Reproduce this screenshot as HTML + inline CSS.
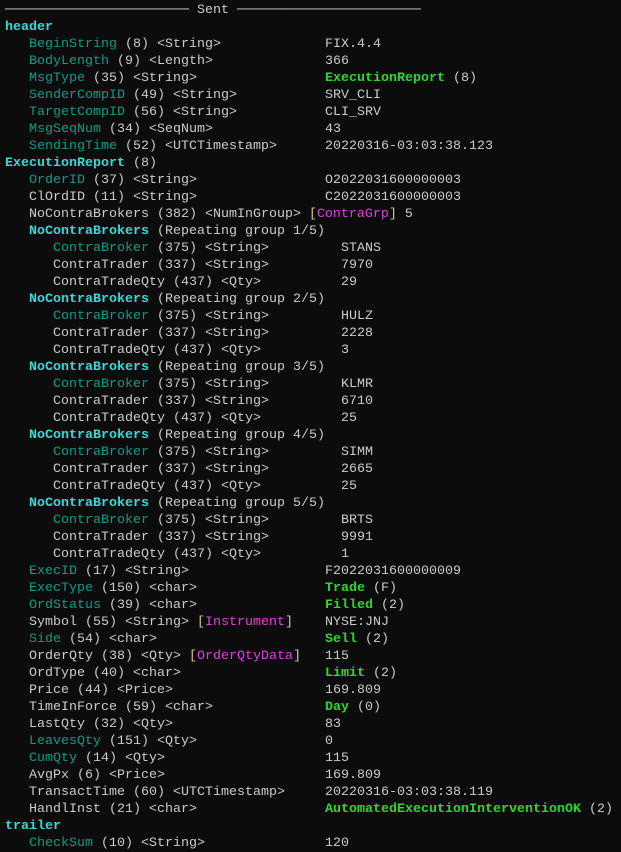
<!DOCTYPE html>
<html><head><meta charset="utf-8"><style>
html,body{margin:0;background:#0c0c0c;}
body{width:621px;height:852px;overflow:hidden;font-family:"Liberation Mono","DejaVu Sans Mono",monospace;font-size:13.33px;color:#cccccc;}
.w{padding-left:5px;padding-top:2px;}
.l{height:17px;line-height:17px;white-space:pre;}
.i1{padding-left:24px}.i2{padding-left:48px}
.k1{display:inline-block;width:296px}
.k2{display:inline-block;width:288px}
.t{color:#139a86}.c{color:#3ad8d8;font-weight:bold}.g{color:#2ed82e;font-weight:bold}.m{color:#e040e0}.y{color:#d8c89a}
</style></head><body><div class="w">
<div class="l">─────────────────────── Sent ───────────────────────</div>
<div class="l c">header</div>
<div class="l i1"><span class="k1"><span class="t">BeginString</span> (8) &lt;String&gt;</span>FIX.4.4</div>
<div class="l i1"><span class="k1"><span class="t">BodyLength</span> (9) &lt;Length&gt;</span>366</div>
<div class="l i1"><span class="k1"><span class="t">MsgType</span> (35) &lt;String&gt;</span><span class="g">ExecutionReport</span> (8)</div>
<div class="l i1"><span class="k1"><span class="t">SenderCompID</span> (49) &lt;String&gt;</span>SRV_CLI</div>
<div class="l i1"><span class="k1"><span class="t">TargetCompID</span> (56) &lt;String&gt;</span>CLI_SRV</div>
<div class="l i1"><span class="k1"><span class="t">MsgSeqNum</span> (34) &lt;SeqNum&gt;</span>43</div>
<div class="l i1"><span class="k1"><span class="t">SendingTime</span> (52) &lt;UTCTimestamp&gt;</span>20220316-03:03:38.123</div>
<div class="l"><span class="c">ExecutionReport</span> (8)</div>
<div class="l i1"><span class="k1"><span class="t">OrderID</span> (37) &lt;String&gt;</span>O2022031600000003</div>
<div class="l i1"><span class="k1">ClOrdID (11) &lt;String&gt;</span>C2022031600000003</div>
<div class="l i1">NoContraBrokers (382) &lt;NumInGroup&gt; <span class="y">[</span><span class="m">ContraGrp</span><span class="y">]</span> 5</div>
<div class="l i1"><span class="c">NoContraBrokers</span> (Repeating group 1/5)</div>
<div class="l i2"><span class="k2"><span class="t">ContraBroker</span> (375) &lt;String&gt;</span>STANS</div>
<div class="l i2"><span class="k2">ContraTrader (337) &lt;String&gt;</span>7970</div>
<div class="l i2"><span class="k2">ContraTradeQty (437) &lt;Qty&gt;</span>29</div>
<div class="l i1"><span class="c">NoContraBrokers</span> (Repeating group 2/5)</div>
<div class="l i2"><span class="k2"><span class="t">ContraBroker</span> (375) &lt;String&gt;</span>HULZ</div>
<div class="l i2"><span class="k2">ContraTrader (337) &lt;String&gt;</span>2228</div>
<div class="l i2"><span class="k2">ContraTradeQty (437) &lt;Qty&gt;</span>3</div>
<div class="l i1"><span class="c">NoContraBrokers</span> (Repeating group 3/5)</div>
<div class="l i2"><span class="k2"><span class="t">ContraBroker</span> (375) &lt;String&gt;</span>KLMR</div>
<div class="l i2"><span class="k2">ContraTrader (337) &lt;String&gt;</span>6710</div>
<div class="l i2"><span class="k2">ContraTradeQty (437) &lt;Qty&gt;</span>25</div>
<div class="l i1"><span class="c">NoContraBrokers</span> (Repeating group 4/5)</div>
<div class="l i2"><span class="k2"><span class="t">ContraBroker</span> (375) &lt;String&gt;</span>SIMM</div>
<div class="l i2"><span class="k2">ContraTrader (337) &lt;String&gt;</span>2665</div>
<div class="l i2"><span class="k2">ContraTradeQty (437) &lt;Qty&gt;</span>25</div>
<div class="l i1"><span class="c">NoContraBrokers</span> (Repeating group 5/5)</div>
<div class="l i2"><span class="k2"><span class="t">ContraBroker</span> (375) &lt;String&gt;</span>BRTS</div>
<div class="l i2"><span class="k2">ContraTrader (337) &lt;String&gt;</span>9991</div>
<div class="l i2"><span class="k2">ContraTradeQty (437) &lt;Qty&gt;</span>1</div>
<div class="l i1"><span class="k1"><span class="t">ExecID</span> (17) &lt;String&gt;</span>F2022031600000009</div>
<div class="l i1"><span class="k1"><span class="t">ExecType</span> (150) &lt;char&gt;</span><span class="g">Trade</span> (F)</div>
<div class="l i1"><span class="k1"><span class="t">OrdStatus</span> (39) &lt;char&gt;</span><span class="g">Filled</span> (2)</div>
<div class="l i1"><span class="k1">Symbol (55) &lt;String&gt; <span class="y">[</span><span class="m">Instrument</span><span class="y">]</span></span>NYSE:JNJ</div>
<div class="l i1"><span class="k1"><span class="t">Side</span> (54) &lt;char&gt;</span><span class="g">Sell</span> (2)</div>
<div class="l i1"><span class="k1">OrderQty (38) &lt;Qty&gt; <span class="y">[</span><span class="m">OrderQtyData</span><span class="y">]</span></span>115</div>
<div class="l i1"><span class="k1">OrdType (40) &lt;char&gt;</span><span class="g">Limit</span> (2)</div>
<div class="l i1"><span class="k1">Price (44) &lt;Price&gt;</span>169.809</div>
<div class="l i1"><span class="k1">TimeInForce (59) &lt;char&gt;</span><span class="g">Day</span> (0)</div>
<div class="l i1"><span class="k1">LastQty (32) &lt;Qty&gt;</span>83</div>
<div class="l i1"><span class="k1"><span class="t">LeavesQty</span> (151) &lt;Qty&gt;</span>0</div>
<div class="l i1"><span class="k1"><span class="t">CumQty</span> (14) &lt;Qty&gt;</span>115</div>
<div class="l i1"><span class="k1">AvgPx (6) &lt;Price&gt;</span>169.809</div>
<div class="l i1"><span class="k1">TransactTime (60) &lt;UTCTimestamp&gt;</span>20220316-03:03:38.119</div>
<div class="l i1"><span class="k1">HandlInst (21) &lt;char&gt;</span><span class="g">AutomatedExecutionInterventionOK</span> (2)</div>
<div class="l c">trailer</div>
<div class="l i1"><span class="k1"><span class="t">CheckSum</span> (10) &lt;String&gt;</span>120</div>
</div></body></html>
